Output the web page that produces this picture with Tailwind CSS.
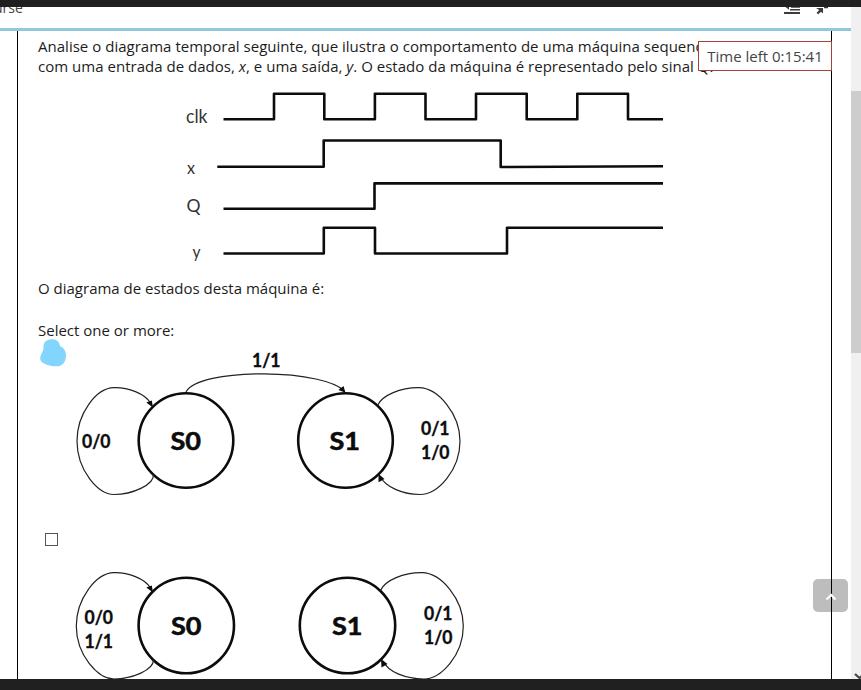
<!DOCTYPE html>
<html lang="pt">
<head>
<meta charset="utf-8">
<title>Quiz</title>
<script src="https://cdn.jsdelivr.net/npm/@tailwindcss/browser@4"></script>
</head>
<body class="w-[861px] h-[690px] overflow-hidden bg-white font-['Open_Sans',sans-serif] text-[15px] leading-5 text-[#1c1c1c]">
<div class="flex h-[690px] flex-col">
  <div class="h-[7px] shrink-0 bg-[#202020]"></div>
  <div class="flex h-[672px] shrink-0 overflow-hidden">
    <div class="flex w-[851px] flex-col">
      <header class="flex h-6 shrink-0 justify-between overflow-hidden border-b-[3px] border-[#93c7de]">
        <span class="-mt-[9px] -ml-[6px] text-[14px] text-[#444]">urse</span>
        <div class="mr-[21px] flex gap-[14px]">
          <svg class="h-[8px] w-[18px]" viewBox="0 0 18 8"><g fill="#3c3c3c"><path d="M2.500 0L6 2.700V0z"/><path d="M8 0h9v.8H8zM7 2h10v1.600H7zM1 5h16v2H1z"/></g></svg>
          <svg class="h-[8px] w-[15px]" viewBox="0 0 15 8"><path d="M1 1h7v5.500L6 4.700 3.200 7.300 1.500 6 4.200 3zM9 0h4v1.200H9z" fill="#3c3c3c"/></svg>
        </div>
      </header>
      <main class="ml-[17px] h-[648px] w-[815px] overflow-hidden border-x border-black pl-5">
        <div class="w-[760px] whitespace-nowrap pt-[5px] tracking-[0.02px]">
          <p class="w-max">Analise o diagrama temporal seguinte, que ilustra o comportamento de uma máquina sequencial</p>
          <p class="w-max">com uma entrada de dados, <i>x</i>, e uma saída, <i>y</i>. O estado da máquina é representado pelo sinal Q.</p>
        </div>
        <svg class="ml-[132px] mt-[4px] block h-[190px] w-[500px]" viewBox="170 80 500 190" font-family="Lato, sans-serif" font-size="18" fill="#333">
          <g fill="none" stroke="#0c0c0c" stroke-width="2.600" stroke-linejoin="round">
            <path d="M223.500 119.300H274V93.800h50.300v25.500h50.600V93.800h50.600v25.500H476V93.800h50.700v25.500h50.600V93.800H628v25.500h35"/>
            <path d="M217.300 166.800h106.400v-26.300H500.700V167L663 166.200"/>
            <path d="M223.500 208.700h151v-25.300H663"/>
            <path d="M223.500 253.500h100.300v-25.800H375v25.800h132v-25.800h156"/>
          </g>
          <text x="186" y="122.500" textLength="21.500" lengthAdjust="spacingAndGlyphs" font-size="18.500">clk</text>
          <text x="187" y="174" textLength="8" lengthAdjust="spacingAndGlyphs">x</text>
          <text x="186.500" y="211.500" textLength="14" lengthAdjust="spacingAndGlyphs">Q</text>
          <text x="192.500" y="258" textLength="8" lengthAdjust="spacingAndGlyphs">y</text>
        </svg>
        <p class="mt-[8px]">O diagrama de estados desta máquina é:</p>
        <p class="mt-[22px]">Select one or more:</p>
        <svg class="-mt-[1px] block h-[161px] w-[440px]" viewBox="38 339 440 161" font-family="Lato, sans-serif" font-weight="bold" fill="#0c0c0c">
          <path d="M43.500 348C43 343 46 339.300 51.500 339.200C57 339 59.500 342 60 346C64 348 66.300 351.500 66 356C65.500 363 62 366.500 56 366.300C50 366.300 42 364 40.500 360C39.300 355.500 43.500 352 43.500 348z" fill="#82d5fc"/>
          <g fill="none" stroke="#0c0c0c" stroke-width="2.600"><circle cx="186" cy="440.500" r="47.300"/><circle cx="345.500" cy="440.500" r="47.300"/></g>
          <g fill="none" stroke="#222" stroke-width="1.200">
            <path d="M150.500 403C145 393.500 128 387.300 114 387.700C96 388 77 414 77 441C77 470 98 494.500 114 494.500C132 494.500 154.500 485 153.500 474"/>
            <path d="M186 392C192 380 225 373.800 264 373.800C305 374 335 382 343 390"/>
            <path d="M377.500 405.500C382 395 401 387.500 419 387.700C438 388 460 414 460 441C460 470 438 494.500 420 494.500C403 494.500 385 487 380 476"/>
          </g>
          <path d="M153 407.500L146.300 402.500L151.800 400.500zM345.500 392.800L338.500 390L343.500 386zM378.500 474L384.500 479L378.500 482.200z"/>
          <g font-size="18" stroke="#0c0c0c" stroke-width=".35">
            <text x="82" y="448" textLength="28.500" lengthAdjust="spacingAndGlyphs">0/0</text>
            <text x="252" y="367" textLength="28.500" lengthAdjust="spacingAndGlyphs">1/1</text>
            <text x="421" y="435" textLength="28.500" lengthAdjust="spacingAndGlyphs">0/1</text>
            <text x="421" y="459" textLength="28.500" lengthAdjust="spacingAndGlyphs">1/0</text>
          </g>
          <g font-size="25.500" stroke="#0c0c0c" stroke-width=".6">
            <text x="170.500" y="449.800" textLength="30.500" lengthAdjust="spacingAndGlyphs">S0</text>
            <text x="329.500" y="449.800" textLength="30.500" lengthAdjust="spacingAndGlyphs">S1</text>
          </g>
        </svg>
        <div class="mt-[33px] ml-[7px] h-[13px] w-[13px] border border-[#555] bg-white"></div>
        <svg class="mt-[14px] block h-[125px] w-[440px]" viewBox="38 560 440 125" font-family="Lato, sans-serif" font-weight="bold" fill="#0c0c0c">
          <g fill="none" stroke="#0c0c0c" stroke-width="2.600"><circle cx="186.300" cy="625.500" r="47.700"/><circle cx="347.500" cy="625.500" r="47.700"/></g>
          <g fill="none" stroke="#222" stroke-width="1.200">
            <path d="M150.500 588C145 578.500 128 572.300 114 572.700C96 573 76.300 599 76.300 626C76.300 655 98 679 114 679C132 679 154.500 670 153.500 659"/>
            <path d="M380.500 590.500C385 580 404 572.500 422 572.700C441 573 463.300 599 463.300 626C463.300 655 441 679 424 679C406 679 388 672 383 661"/>
          </g>
          <path d="M153 592.500L146.300 587.500L151.800 585.500zM381 659L387.500 664L381.500 667.500z"/>
          <g font-size="18" stroke="#0c0c0c" stroke-width=".35">
            <text x="84.500" y="623.500" textLength="28.500" lengthAdjust="spacingAndGlyphs">0/0</text>
            <text x="84.500" y="647.500" textLength="28.500" lengthAdjust="spacingAndGlyphs">1/1</text>
            <text x="424" y="620" textLength="28.500" lengthAdjust="spacingAndGlyphs">0/1</text>
            <text x="424" y="644" textLength="28.500" lengthAdjust="spacingAndGlyphs">1/0</text>
          </g>
          <g font-size="25.500" stroke="#0c0c0c" stroke-width=".6">
            <text x="171" y="635" textLength="30.500" lengthAdjust="spacingAndGlyphs">S0</text>
            <text x="332" y="635" textLength="30.500" lengthAdjust="spacingAndGlyphs">S1</text>
          </g>
        </svg>
      </main>
    </div>
    <div class="flex w-[10px] flex-col justify-between overflow-hidden bg-[#f0f0f0]">
      <div class="mt-[84px] h-[262px] bg-[#cdcdcd]"></div>
      <svg class="h-[6px] w-[10px]" viewBox="0 0 10 6"><path d="M4 1l4.500 4L13 1" fill="none" stroke="#444" stroke-width="2.200"/></svg>
    </div>
  </div>
  <div class="h-[11px] shrink-0 bg-[#202020]"></div>
</div>
<div class="absolute left-[698px] top-[41px] flex h-[30px] w-[134px] items-center justify-center border border-[#a3443c] bg-white whitespace-nowrap text-[#444]"><span>Time left 0:15:41</span></div>
<button class="absolute left-[813px] top-[579px] h-[33px] w-[35px] overflow-hidden rounded-[5px] bg-[#bdbdbd]" aria-label="Topo">
  <svg class="h-[33px] w-[35px]" viewBox="0 0 35 33"><path d="M18.500 0v33" stroke="#000"/><path d="M13.500 20.500l4.700-4.500 4.300 4.500" fill="none" stroke="#fff" stroke-width="2"/></svg>
</button>
</body>
</html>
